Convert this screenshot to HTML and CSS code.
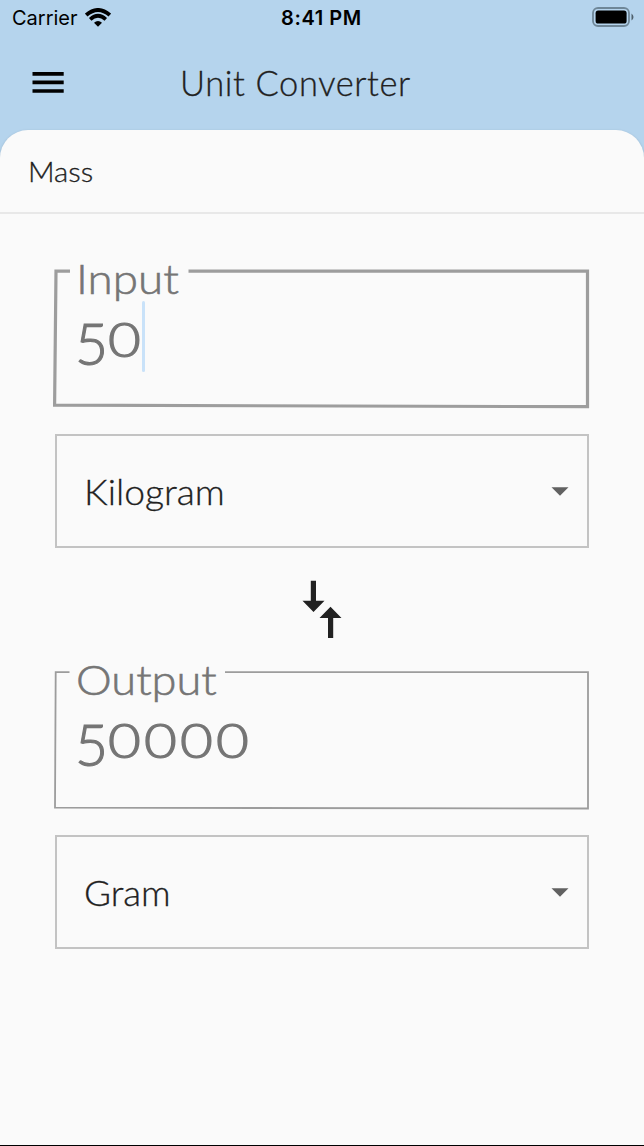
FILE: index.html
```html
<!DOCTYPE html>
<html lang="en">
<head>
<meta charset="utf-8">
<title>Unit Converter</title>
<link rel="stylesheet" href="styles.css">
</head>
<body>
<div class="app">
  <div class="status">
    <div class="carrier"><span class="carrier-name">Carrier</span>
      <svg class="wifi" width="26" height="20" viewBox="0 0 26 20" fill="none" stroke="#000"><path d="M1.2 7.1Q13 -3.1 24.8 7.1" stroke-width="3.9"/><path d="M5.2 11.3Q13 4.2 20.8 11.3" stroke-width="3.6"/><path d="M9 14.8Q13 11.4 17 14.8L13 18.8Z" fill="#000" stroke="none"/></svg>
    </div>
    <span class="clock">8:41 PM</span>
    <svg class="battery" width="43" height="20" viewBox="0 0 43 20"><rect x="1" y="1" width="36" height="18" rx="5" fill="none" stroke="#6f8798" stroke-width="1.8"/><rect x="3.6" y="3.6" width="31" height="13" rx="2.6"/><path d="M39.500 6.500Q41.500 8 41.500 10T39.500 13.500Z" fill="#4f606d"/></svg>
  </div>
  <header class="bar">
    <svg class="menu" width="32" height="22" viewBox="0 0 32 22"><path d="M.5 0H31.700V3.800H.5ZM.5 8.600H31.700V12.200H.5ZM.5 17.200H31.700V20.800H.5Z"/></svg>
    <h1 class="title">Unit Converter</h1>
  </header>
  <main class="panel">
    <h2 class="category"><span class="category-name">Mass</span></h2>
    <div class="converter">
      <section class="field">
        <svg class="outline" width="538" height="142" viewBox="0 0 538 142" fill="none" stroke="#9d9d9d" stroke-width="3.2"><path d="M18 4.200H4L2.600 138.200L535.500 139.700V4.200H136.500"/></svg>
        <span class="label input-label">Input</span>
        <div class="value"><span class="five">5</span><span class="zeros">0</span><span class="caret"></span></div>
      </section>
      <section class="select"><span class="unit kilogram">Kilogram</span><svg class="arrow" width="18" height="9" viewBox="0 0 18 9"><path d="M.5 .3H17.500L9 8.700Z"/></svg></section>
      <div class="swap"><svg width="40" height="58" viewBox="0 0 40 58" fill="#212121"><path d="M8.800 .8H14V20.800H22.500L11.500 32L.5 20.800H8.800ZM26 58H31.200V38H39.500L28.500 26.800L17.500 38H26Z"/></svg></div>
      <section class="field">
        <svg class="outline" width="538" height="142" viewBox="0 0 538 142" fill="none" stroke="#9c9c9c" stroke-width="1.8"><path d="M17.500 4.200H3.700L3 139.700L536 140.500V4.200H173"/></svg>
        <span class="label output-label">Output</span>
        <div class="value"><span class="five">5</span><span class="zeros">0000</span></div>
      </section>
      <section class="select"><span class="unit gram">Gram</span><svg class="arrow" width="18" height="9" viewBox="0 0 18 9"><path d="M.5 .3H17.500L9 8.700Z"/></svg></section>
    </div>
  </main>
</div>
</body>
</html>
```

FILE: styles.css
```css
* { box-sizing: border-box; }
body { margin: 0; background: #b5d4ed; font-family: Lato, "Open Sans", sans-serif; font-weight: 300; color: #212121; }
.app { height: 1146px; display: flex; flex-direction: column; border-bottom: 1px solid #000; }
h1, h2 { margin: 0; font-weight: 300; }
.status { height: 36px; padding: 0 9px 0 12px; display: grid; grid-template-columns: 269px auto 1fr; align-items: center; font: 400 20px/36px Inter, sans-serif; color: #000; }
.carrier { display: flex; align-items: center; gap: 7px; }
.clock { font-weight: 600; letter-spacing: .6px; }
.battery { justify-self: end; margin-top: -2px; }
.bar { height: 94px; display: flex; align-items: center; padding: 0 32px; }
.title { margin-left: 116px; font-size: 34.500px; line-height: 50px; letter-spacing: .6px; white-space: nowrap; -webkit-text-stroke: .3px #212121; }
.panel { flex: 1; background: #fafafa; border-radius: 28px 28px 0 0; box-shadow: 0 1px 3px rgba(0, 0, 0, .18); }
.category { height: 84px; padding-left: 28px; border-bottom: 2px solid #e8e8e8; font-size: 27px; line-height: 83px; }
.category-name, .label, .unit { display: inline-block; transform-origin: left; }
.category-name { transform: scaleX(1.085); -webkit-text-stroke: .3px #212121; }
.converter { padding: 53px 54px 0 52px; display: flex; flex-direction: column; }
.field { position: relative; height: 142px; padding-left: 24px; color: #757575; }
.outline { position: absolute; left: 0; top: 0; }
.label { height: 42px; font-size: 42px; line-height: 22px; white-space: nowrap; vertical-align: top; -webkit-text-stroke: .6px #757575; }
.input-label { transform: scaleX(1.09); }
.output-label { transform: scaleX(1.075); }
.value { display: flex; align-items: flex-start; height: 72px; -webkit-text-stroke: 1.2px #757575; }
.five { font-size: 57px; line-height: 68px; width: 33px; margin-left: -1px; }
.zeros { font-size: 48px; line-height: 59px; transform-origin: left; transform: scaleX(1.18); letter-spacing: 2.700px; }
.caret { width: 3px; height: 71px; border-radius: 2px; background: #c9e2f9; margin: -8px 0 0 3px; }
.select { height: 114px; margin: 25px 0 0 3px; padding: 0 18px 0 27px; border: 2px solid #c3c3c3; display: flex; align-items: center; justify-content: space-between; width: 534px; }
.unit { font-size: 34.500px; line-height: 52px; padding-top: 2px; -webkit-text-stroke: .3px #212121; }
.kilogram { transform: scaleX(1.08); }
.gram { transform: scaleX(1.065); }
.arrow { fill: #616161; }
.swap { height: 120px; padding: 32px 0 0 250px; }
```
